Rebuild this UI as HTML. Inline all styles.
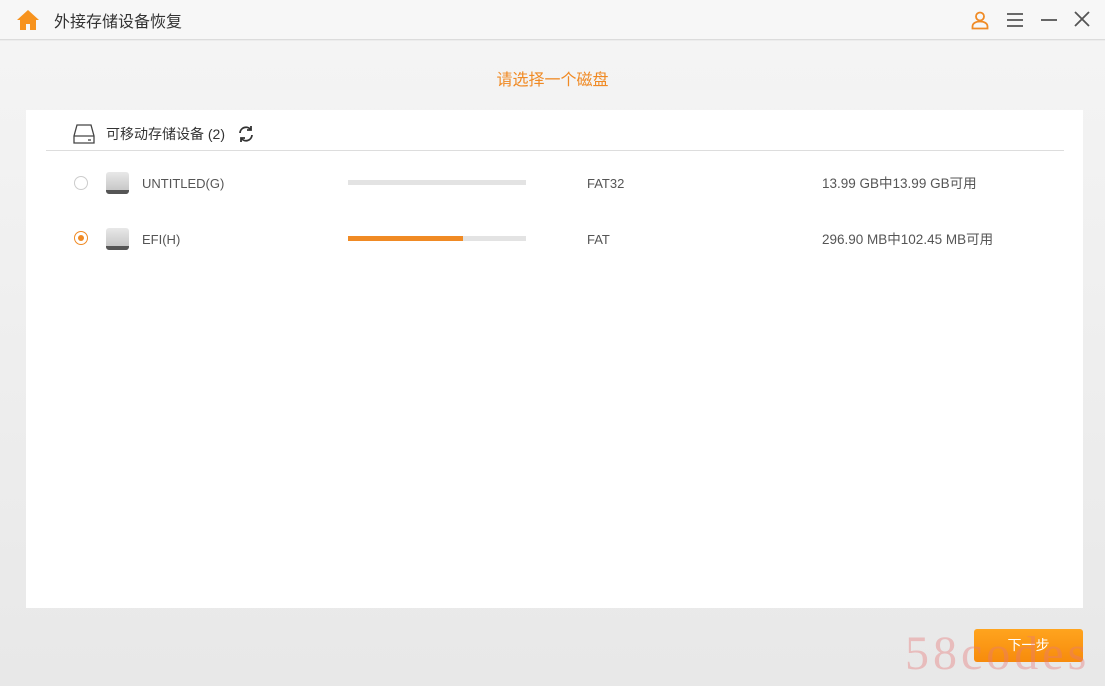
<!DOCTYPE html>
<html><head><meta charset="utf-8"><style>
*{margin:0;padding:0;box-sizing:border-box}
body{width:1105px;height:686px;overflow:hidden;background:#ececec;font-family:"Liberation Sans","Noto Sans CJK SC",sans-serif;position:relative;color:#444}
.top{position:absolute;left:0;top:0;width:1105px;height:40px;background:#f7f7f7;border-bottom:1px solid #dcdcdc}
.title{position:absolute;left:54px;top:8px;font-size:16px;color:#333}
.bg{position:absolute;left:0;top:41px;width:1105px;height:645px;background:linear-gradient(#f4f4f4,#e8e8e8)}
.sub{position:absolute;left:0;width:1105px;top:66px;text-align:center;color:#f08a24;font-size:16px}
.panel{position:absolute;left:26px;top:110px;width:1057px;height:498px;background:#fff}
.t{position:absolute;font-size:13px;color:#555;line-height:16px}
.bar{position:absolute;left:348px;width:178px;height:5px;background:#e3e3e3}
.disk{position:absolute;left:106px;width:23px;height:22px;border-radius:3px;background:linear-gradient(#e8e8e8,#c8c8c8);border-bottom:4px solid #555}
.radio{position:absolute;left:74px;width:14px;height:14px;border-radius:50%;border:1px solid #ccc;background:#fff}
.btn{position:absolute;left:974px;top:629px;width:109px;height:33px;border-radius:3px;background:linear-gradient(#ffa41e,#f78b0c);color:#fff;font-size:14px;text-align:center;line-height:33px}
.wm{position:absolute;left:905px;top:626px;font-family:"Liberation Serif",serif;font-size:48px;color:rgba(230,120,120,0.4);letter-spacing:4px}
</style></head><body>
<div class="bg"></div>
<div class="top">
<svg style="position:absolute;left:16px;top:9px" width="24" height="22" viewBox="0 0 24 22"><path d="M12 1L1 11h3v10h6v-6h4v6h6V11h3z" fill="#f7931e"/></svg>
<div class="title">外接存储设备恢复</div>
<svg style="position:absolute;left:970px;top:10px" width="20" height="20" viewBox="0 0 20 20" fill="none" stroke="#f08a24" stroke-width="1.8"><circle cx="10" cy="6.5" r="4"/><path d="M2.5 18.5v-2c0-3 3-5 7.5-5s7.5 2 7.5 5v2z"/></svg>
<svg style="position:absolute;left:1006px;top:12px" width="18" height="16" stroke="#555" stroke-width="1.8"><path d="M1 2h16M1 8h16M1 14h16"/></svg>
<svg style="position:absolute;left:1040px;top:12px" width="18" height="16" stroke="#555" stroke-width="1.8"><path d="M1 8h16"/></svg>
<svg style="position:absolute;left:1074px;top:11px" width="16" height="16" stroke="#555" stroke-width="1.8"><path d="M1 1l14 14M15 1L1 15"/></svg>
</div>
<div class="sub">请选择一个磁盘</div>
<div class="panel"></div>
<svg style="position:absolute;left:73px;top:124px" width="22" height="20" fill="none" stroke="#444" stroke-width="1.3"><path d="M4 1h14l3 11v7H1v-7z M1 12h20"/><path d="M15 16h3"/></svg>
<div class="t" style="left:106px;top:126px;color:#333;font-size:14px">可移动存储设备 (2)</div>
<svg style="position:absolute;left:236px;top:124px" width="20" height="20" fill="none" stroke="#333" stroke-width="1.8"><path d="M4 9a6 6 0 0 1 11-3M16 11a6 6 0 0 1-11 3"/><path d="M15 2v4h-4M5 18v-4h4"/></svg>
<div style="position:absolute;left:46px;top:150px;width:1018px;height:1px;background:#ddd"></div>
<div class="radio" style="top:176px"></div>
<div class="disk" style="top:172px"></div>
<div class="t" style="left:142px;top:176px">UNTITLED(G)</div>
<div class="bar" style="top:180px"></div>
<div class="t" style="left:587px;top:176px">FAT32</div>
<div class="t" style="left:822px;top:176px;font-size:13.5px">13.99 GB中13.99 GB可用</div>
<div class="radio" style="top:231px;border-color:#f08a24"><div style="position:absolute;left:3px;top:3px;width:6px;height:6px;border-radius:50%;background:#f08a24"></div></div>
<div class="disk" style="top:228px"></div>
<div class="t" style="left:142px;top:232px">EFI(H)</div>
<div class="bar" style="top:236px"><div style="width:115px;height:5px;background:#f08a24"></div></div>
<div class="t" style="left:587px;top:232px">FAT</div>
<div class="t" style="left:822px;top:232px;font-size:13.5px">296.90 MB中102.45 MB可用</div>
<div class="btn">下一步</div>
<div class="wm">58codes</div>
</body></html>
